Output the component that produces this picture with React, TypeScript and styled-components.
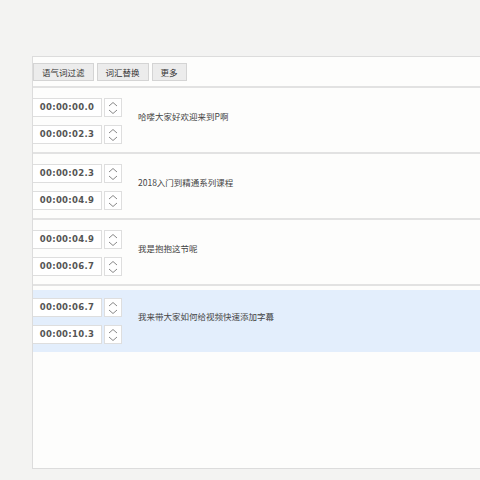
import React, { FC } from "react";
import styled, { createGlobalStyle } from "styled-components";

const Global = createGlobalStyle`
  html, body { margin: 0; padding: 0; background: #f3f3f2; }
  body { font-family: "Noto Sans CJK SC", "Liberation Sans", sans-serif; }
`;

interface Line { start: string; end: string; text: string; active?: boolean }

const lines: Line[] = [
  { start: "00:00:00.0", end: "00:00:02.3", text: "哈喽大家好欢迎来到P啊" },
  { start: "00:00:02.3", end: "00:00:04.9", text: "2018入门到精通系列课程" },
  { start: "00:00:04.9", end: "00:00:06.7", text: "我是抱抱这节呢" },
  { start: "00:00:06.7", end: "00:00:10.3", text: "我来带大家如何给视频快速添加字幕", active: true },
];

const Spinner: FC = () => (
  <Spin>
    <svg width="10" height="14" viewBox="0 0 10 14">
      <path d="M1 5 L5 1.5 L9 5" fill="none" stroke="#888" strokeWidth="1" />
      <path d="M1 9 L5 12.5 L9 9" fill="none" stroke="#888" strokeWidth="1" />
    </svg>
  </Spin>
);

const TimeField: FC<{ value: string }> = ({ value }) => (
  <FieldRow>
    <TimeInput>{value}</TimeInput>
    <Spinner />
  </FieldRow>
);

export default function App() {
  return (
    <Page>
      <Global />
      <Panel>
        <Toolbar>
          <ToolButton>语气词过滤</ToolButton>
          <ToolButton>词汇替换</ToolButton>
          <ToolButton>更多</ToolButton>
        </Toolbar>
        {lines.map((l, i) => (
          <Row key={i} active={l.active}>
            <Times>
              <TimeField value={l.start} />
              <TimeField value={l.end} />
            </Times>
            <Caption>{l.text}</Caption>
          </Row>
        ))}
      </Panel>
    </Page>
  );
}

const Page = styled.div`
  height: 480px;
  padding: 56px 0 0 32px;
  box-sizing: border-box;
  overflow: hidden;
`;

const Panel = styled.div`
  background: #fdfdfc;
  border: 1px solid #dcdcdc;
  border-right: none;
  height: 411px;
`;

const Toolbar = styled.div`
  display: flex;
  gap: 3px;
  padding: 6px 0 5px 0;
  border-bottom: 2px solid #e2e2e2;
`;

const ToolButton = styled.div`
  background: #ececec;
  border: 1px solid #d4d4d4;
  font-size: 8.5px;
  color: #333;
  height: 16px;
  line-height: 16px;
  padding: 0 8px;
`;

const Row = styled.div<{ active?: boolean }>`
  display: flex;
  align-items: center;
  height: 62px;
  margin-top: ${p => (p.active ? "4px" : "2px")};
  background: ${p => (p.active ? "#e3eefc" : "transparent")};
  border-bottom: ${p => (p.active ? "none" : "2px solid #e2e2e2")};
`;

const Times = styled.div`
  display: flex;
  flex-direction: column;
  gap: 8px;
  width: 105px;
`;

const FieldRow = styled.div`
  display: flex;
  gap: 2px;
`;

const TimeInput = styled.div`
  width: 68px;
  height: 17px;
  background: #fff;
  border: 1px solid #dedede;
  border-left: none;
  font-family: "DejaVu Sans", sans-serif;
  font-weight: 600;
  font-size: 8.5px;
  letter-spacing: 0.3px;
  color: #555;
  line-height: 17px;
  text-align: center;
`;

const Spin = styled.div`
  width: 16px;
  height: 17px;
  border: 1px solid #dedede;
  background: #fff;
  display: flex;
  align-items: center;
  justify-content: center;
`;

const Caption = styled.div`
  font-size: 8.5px;
  color: #444;
  margin-top: -10px;
`;
